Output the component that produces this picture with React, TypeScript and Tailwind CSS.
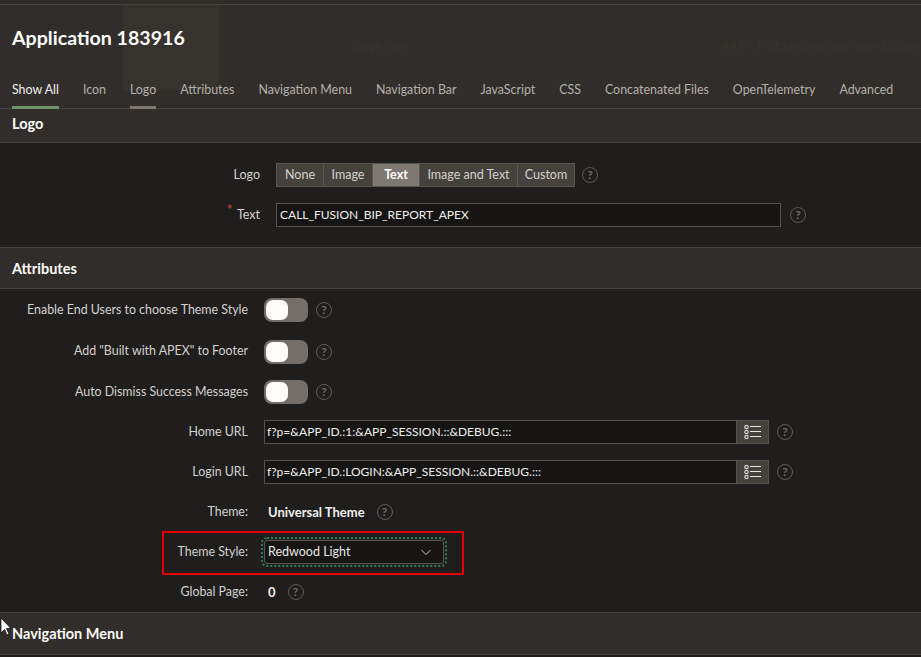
import React from "react";

const font = { fontFamily: 'Lato, "Open Sans", sans-serif' };

function Help({ className = "" }: { className?: string }) {
  return (
    <span className={"flex h-[16px] w-[16px] shrink-0 items-center justify-center rounded-full border border-[#5f5b57] text-[12px] font-bold leading-none text-[#6f6b66] " + className}>
      ?
    </span>
  );
}

function SectionHead({ title, className }: { title: string; className: string }) {
  return (
    <div className={"flex items-center border-y border-[#45413d] bg-[#312d2a] pl-3 text-[14.5px] font-bold text-[#fcfbfa] " + className}>
      {title}
    </div>
  );
}

function Toggle({ label, className }: { label: string; className: string }) {
  return (
    <div className={"flex items-center " + className}>
      <div className="w-[248px] text-right text-[12.4px] text-[#d4d1cd]">{label}</div>
      <div className="ml-[16px] flex h-[24px] w-[44px] items-center rounded-[8px] bg-[#736e69] pl-[2px]">
        <div className="h-[20px] w-[22px] rounded-[7px] bg-[#fffdfb]" />
      </div>
      <Help className="ml-[8px]" />
    </div>
  );
}

function ListIcon() {
  return (
    <svg width="18" height="16" viewBox="0 0 18 16" fill="none">
      {[3, 8, 13].map((y) => (
        <g key={y}>
          <circle cx="2.500" cy={y} r="1.700" stroke="#cfd4d6" strokeWidth="1.200" />
          <path d={`M6 ${y - 0.5}H17`} stroke="#e8e6e3" strokeWidth="1" />
        </g>
      ))}
    </svg>
  );
}

function UrlRow({ label, value }: { label: string; value: string }) {
  return (
    <div className="flex h-[40px] items-center">
      <div className="w-[248px] text-right text-[12.4px] text-[#d4d1cd]">{label}</div>
      <div className="ml-[16px] flex h-[24px] w-[505px]">
        <div className="flex w-[473px] items-center border border-[#55514d] bg-[#161513] pl-[2px] text-[12px] text-[#f1efed]">
          {value}
        </div>
        <div className="flex w-[32px] items-center justify-center border border-l-0 border-[#55514d] bg-[#45413d]">
          <ListIcon />
        </div>
      </div>
      <Help className="ml-[8px]" />
    </div>
  );
}

const tabs = [
  "Show All",
  "Icon",
  "Logo",
  "Attributes",
  "Navigation Menu",
  "Navigation Bar",
  "JavaScript",
  "CSS",
  "Concatenated Files",
  "OpenTelemetry",
  "Advanced",
];

const segs = [
  ["None", "w-[46px]"],
  ["Image", "w-[49px]"],
  ["Text", "w-[47px]"],
  ["Image and Text", "w-[98px]"],
  ["Custom", "w-[57px]"],
];

export default function App() {
  return (
    <div style={font} className="relative h-[657px] w-[921px] overflow-hidden bg-[#201e1c]">
      {/* header */}
      <div className="relative h-[109px] border-b border-[#45413d] bg-[#312d2a]">
        <div className="h-[5px] border-b border-[#45413d]" />
        <div className="absolute left-[123px] top-[5px] h-[85px] w-[96px] bg-[#36322e]" />
        <div className="absolute left-[353px] top-[37px] text-[12px] text-[#37332f]">Large Icon</div>
        <div className="absolute left-[722px] top-[37px] text-[12.300px] text-[#37332f]">
          #APP_FILES#icons/app-icon-512.pn
        </div>
        <div className="relative ml-3 mt-[17px] h-[32px] text-[19.6px] font-bold leading-[32px] text-[#fcfbfa]">Application 183916</div>
        <div className="relative mt-[25px] flex h-[30px] pl-3">
          {tabs.map((t, i) => (
            <div
              key={t}
              className={
                "mr-[24px] flex h-[30px] items-start whitespace-nowrap border-b-[3px] pt-[2px] text-[12.4px] " +
                (i === 0
                  ? "border-[#6c9669] text-[#f1efed]"
                  : i === 2
                  ? "border-[#7d7872] text-[#b5b1ac]"
                  : "border-transparent text-[#b5b1ac]")
              }
            >
              {t}
            </div>
          ))}
        </div>
      </div>

      <SectionHead title="Logo" className="h-[34px] border-t-0 pb-[4px]" />

      {/* logo body */}
      <div className="h-[105px] pt-[13px]">
        <div className="flex h-[38px] items-center">
          <div className="w-[260px] pt-[1px] text-right text-[12.5px] text-[#d4d1cd]">Logo</div>
          <div className="ml-[16px] flex h-[24px] border border-[#5a5652] bg-[#45413d] text-[12.5px] text-[#d4d1cd]">
            {segs.map(([s, w], i) => (
              <div
                key={s}
                className={
                  "flex items-center justify-center pt-[1px] " +
                  w +
                  (i > 0 ? " border-l border-[#5a5652]" : "") +
                  (s === "Text" ? " bg-[#7d7872] font-bold text-[#fcfbfa]" : "")
                }
              >
                {s}
              </div>
            ))}
          </div>
          <Help className="ml-[7px]" />
        </div>
        <div className="flex h-[42px] items-center">
          <div className="w-[260px] pt-[1px] text-right text-[12.5px] text-[#d4d1cd]">
            <span className="relative -top-[4px] mr-[4px] text-[15px] leading-none text-[#b8463a]">*</span>
            Text
          </div>
          <div className="ml-[16px] flex h-[24px] w-[505px] items-center border border-[#55514d] bg-[#161513] pl-[3px] text-[12px] text-[#f1efed]">
            CALL_FUSION_BIP_REPORT_APEX
          </div>
          <Help className="ml-[9px]" />
        </div>
      </div>

      <div className="-mt-[1px]">
        <SectionHead title="Attributes" className="h-[42px] pt-[2px]" />
      </div>

      {/* attributes body */}
      <div className="h-[323px]">
        <Toggle label="Enable End Users to choose Theme Style" className="h-[42px]" />
        <Toggle label={'Add "Built with APEX" to Footer'} className="h-[41px]" />
        <Toggle label="Auto Dismiss Success Messages" className="h-[40px]" />
        <UrlRow label="Home URL" value="f?p=&APP_ID.:1:&APP_SESSION.::&DEBUG.:::" />
        <UrlRow label="Login URL" value="f?p=&APP_ID.:LOGIN:&APP_SESSION.::&DEBUG.:::" />
        <div className="flex h-[40px] items-center">
          <div className="w-[248px] pt-[1px] text-right text-[12.4px] text-[#d4d1cd]">Theme:</div>
          <div className="ml-[20px] pt-[1px] text-[13px] font-bold text-[#f1efed]">Universal Theme</div>
          <Help className="ml-[12px]" />
        </div>
        <div className="flex h-[40px] items-center">
          <div className="w-[248px] pt-[1px] text-right text-[12.4px] text-[#d4d1cd]">Theme Style:</div>
          <div className="ml-[16px] flex h-[24px] w-[180px] items-center justify-between rounded-[3px] border border-[#5a5652] bg-[#161513] pl-[3px] pr-[11px] text-[12.5px] text-[#e8e6e3] outline-2 outline-dotted outline-offset-[1px] outline-[#2e7d5b]">
            <span className="pt-[1px]">Redwood Light</span>
            <svg width="12" height="7" viewBox="0 0 12 7" fill="none">
              <path d="M1.500 1L6 5.500L10.500 1" stroke="#c9c6c2" strokeWidth="1" />
            </svg>
          </div>
        </div>
        <div className="flex h-[40px] items-center">
          <div className="w-[248px] pt-[1px] text-right text-[12.4px] text-[#d4d1cd]">Global Page:</div>
          <div className="ml-[20px] pt-[1px] text-[13px] font-bold text-[#f1efed]">0</div>
          <Help className="ml-[12px]" />
        </div>
      </div>

      <SectionHead title="Navigation Menu" className="h-[43px] pt-[1px]" />

      {/* annotation box */}
      <div className="absolute left-[162px] top-[531px] h-[44px] w-[302px] border-[2px] border-[#e60000]" />

      {/* mouse cursor */}
      <svg className="absolute left-0 top-[617px]" width="12" height="20" viewBox="0 0 12 20">
        <path d="M1 1V16L4.500 12.500L7 18L9 17L6.500 11.500H11Z" fill="#fff" stroke="#111" strokeWidth="0.800" />
      </svg>
    </div>
  );
}
